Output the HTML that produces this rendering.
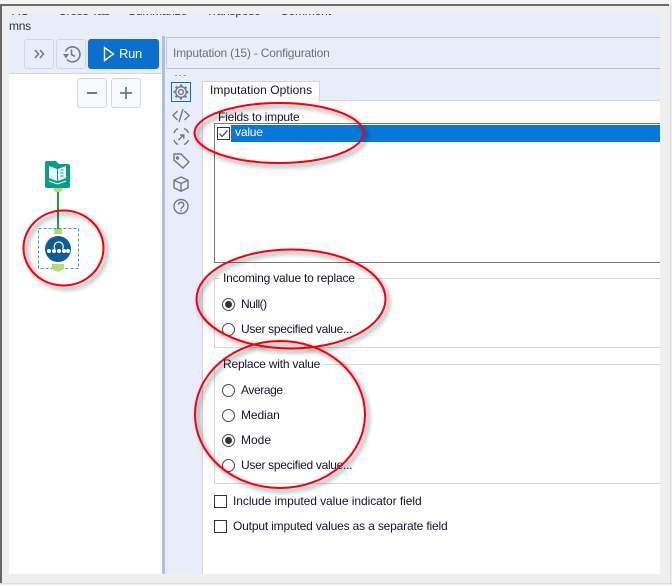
<!DOCTYPE html>
<html><head><meta charset="utf-8">
<style>
html,body{margin:0;padding:0;width:672px;height:586px;overflow:hidden;background:#efefef}
body{position:relative;font-family:"Liberation Sans",sans-serif;font-size:12px;color:#1a1030}
div,span,svg{position:absolute}
.t{white-space:nowrap;line-height:14px;letter-spacing:-.18px}
.btn{box-sizing:border-box;border:1px solid #cdd6ea;border-radius:3px;background:#e9edf9}
.rd{box-sizing:border-box;width:13px;height:13px;border:1px solid #4a4a4a;border-radius:50%;background:#fff;left:222px}
.rd.on:after{content:"";position:absolute;left:2px;top:2px;width:7px;height:7px;border-radius:50%;background:#333}
.cb{box-sizing:border-box;width:13px;height:13px;border:1px solid #333;background:#fff;left:214px}
.gr{box-sizing:border-box;left:214px;width:446px;border:1px solid #d8d8d8;border-right:0}
.lg{left:220px;background:#fff;padding:0 3px}
</style></head><body>
<!-- frame -->
<div style="left:0;top:0;width:672px;height:4px;background:#f4f4f4"></div>
<div style="left:0;top:4px;width:669px;height:2px;background:#6b6b6b"></div>
<div style="left:0;top:4px;width:2px;height:579px;background:#666"></div>
<div style="left:670px;top:5px;width:1px;height:578px;background:#dcdcdc"></div>
<div style="left:0;top:583px;width:672px;height:1px;background:#dcdcdc"></div>
<div style="left:0;top:585px;width:672px;height:1px;background:#fff"></div>
<!-- main -->
<div style="left:9px;top:14px;width:651px;height:560px;background:#e9edf9;overflow:hidden">
  <div class="t" style="left:0;top:-10px;color:#333">&nbsp;AG</div>
  <div class="t" style="left:49px;top:-10px;color:#333">Cross Tab</div>
  <div class="t" style="left:119px;top:-10px;color:#333">Summarize</div>
  <div class="t" style="left:197px;top:-10px;color:#333">Transpose</div>
  <div class="t" style="left:271px;top:-10px;color:#333">Comment</div>
  <div class="t" style="left:0;top:5px;color:#333;letter-spacing:-.3px">mns</div>
</div>
<!-- toolbar buttons -->
<div class="btn" style="left:24px;top:39px;width:30px;height:30px"></div>
<svg style="left:24px;top:39px" width="30" height="30" fill="none" stroke="#6c7a92" stroke-width="1.600"><path d="M11 11l3.500 4-3.500 4M16 11l3.500 4-3.500 4"/></svg>
<div class="btn" style="left:56px;top:39px;width:30px;height:30px"></div>
<svg style="left:56px;top:39px" width="30" height="30" fill="none" stroke="#6c7a92" stroke-width="1.600"><path d="M9.500 12.500A7.500 7.500 0 1 1 11 20.500"/><path d="M15.500 10.500v5l3.500 2"/><path d="M7 15h6l-3 4.500z" fill="#6c7a92" stroke="none"/></svg>
<div style="left:88px;top:39px;width:71px;height:30px;background:#0b6fcf;border-radius:3px"></div>
<svg style="left:88px;top:39px" width="30" height="30" fill="none" stroke="#fff" stroke-width="1.400"><path d="M16.500 8.500v13l9-6.500z"/></svg>
<div class="t" style="left:119px;top:47px;color:#fff;font-size:13px;letter-spacing:-.3px">Run</div>
<!-- canvas -->
<div style="left:9px;top:74px;width:153px;height:500px;background:#fff"></div>
<div style="left:9px;top:73px;width:153px;height:1px;background:#d0d6e6"></div>
<div class="btn" style="left:77px;top:78px;width:30px;height:30px;background:#f7f9fd"></div>
<svg style="left:77px;top:78px" width="30" height="30" stroke="#6c7a92" stroke-width="2"><path d="M10 15h10"/></svg>
<div class="btn" style="left:111px;top:78px;width:30px;height:30px;background:#f7f9fd"></div>
<svg style="left:111px;top:78px" width="30" height="30" stroke="#6c7a92" stroke-width="1.800"><path d="M9 15h12M15 9v12"/></svg>
<!-- workflow -->
<svg style="left:35px;top:155px" width="48" height="120">
  <path d="M10 8a2 2 0 0 1 2-2h9l3 3h9a2 2 0 0 1 2 2v20a2 2 0 0 1-2 2H12a2 2 0 0 1-2-2z" fill="#0f9b8c"/>
  <path d="M14 11l8 3v12l-8-3zM31 11l-8 3v12l8-3z" fill="#e8f7f4"/>
  <path d="M14 26l8.500 3 8.500-3" fill="none" stroke="#e8f7f4" stroke-width="1"/>
  <path d="M25.500 15h3M25.500 18h3M25.500 21h3" stroke="#0f9b8c"/>
  <path d="M18.500 33h9v2l-2 2h-5l-2-2z" fill="#b8d96c"/>
  <path d="M23 37v37" stroke="#1f9c45" stroke-width="2"/>
  <rect x="3.500" y="73.500" width="40" height="40" fill="none" stroke="#3a98e0" stroke-dasharray="3 2"/>
  <rect x="19" y="74" width="8" height="5" fill="#b8d96c"/>
  <circle cx="23" cy="94" r="13" fill="#0f5c96"/>
  <circle cx="14" cy="96" r="2" fill="#fff"/><circle cx="19" cy="96" r="2" fill="#fff"/><circle cx="24" cy="96" r="2" fill="#fff"/><circle cx="29" cy="96" r="2" fill="#fff"/><circle cx="33" cy="96" r="2" fill="#fff"/>
  <path d="M20 94a4.500 4.500 0 1 1 7.500 0" fill="none" stroke="#fff" stroke-width="1.200"/>
  <path d="M17 109h12v5l-6 3-6-3z" fill="#b8d96c"/>
</svg>
<!-- splitter -->
<div style="left:162px;top:36px;width:3px;height:538px;background:#adc0e3"></div>
<!-- config header -->
<div style="left:166px;top:37px;width:494px;height:32px;box-sizing:border-box;border:1px solid #bfbfbf;border-left-color:#d0d0d0;border-right:0;background:#e9edf9"></div>
<div class="t" style="left:173px;top:46px;color:#6f6f76;letter-spacing:-.2px">Imputation (15) - Configuration</div>
<!-- side icons -->
<div style="left:194px;top:74px;width:1px;height:500px;background:#eef1fb"></div>
<div style="left:202px;top:101px;width:1px;height:473px;background:#d6d6d6"></div>
<div style="left:175px;top:75px;width:2px;height:1px;background:#999"></div>
<div style="left:179px;top:75px;width:2px;height:1px;background:#999"></div>
<div style="left:184px;top:75px;width:2px;height:1px;background:#999"></div>
<div style="left:171px;top:82px;width:20px;height:20px;box-sizing:border-box;border:1px solid #0b6fcf"></div>
<svg style="left:165px;top:70px" width="34" height="150" fill="none" stroke="#6b7890" stroke-width="1.400">
  <circle cx="16" cy="22" r="2.400"/>
  <circle cx="16" cy="22" r="5.300"/>
  <circle cx="16" cy="22" r="6.700" stroke-width="1.600" stroke-dasharray="2.200 3.060" stroke-dashoffset="1.100"/>
  <path d="M12.500 41l-4.500 4.500 4.500 4.500M19.500 41l4.500 4.500-4.500 4.500M18 39l-4 13"/>
  <path d="M9 63a8 8 0 0 1 4-4.500M19 58.500a8 8 0 0 1 4.500 4.500M23.500 70a8 8 0 0 1-4.500 4.500M13 74.500a8 8 0 0 1-4-4.500"/>
  <path d="M13.500 70l5-5M15 65h3.800v3.800"/>
  <path d="M9 84h7l8 8-6 6-9-8z"/><circle cx="12.500" cy="88" r="1"/>
  <path d="M16 107l7 3.200v7.600l-7 3.400-7-3.400v-7.600zM9 110.200l7 3.200 7-3.200M16 113.400v7.800"/>
  <circle cx="16" cy="136.500" r="7"/>
  <path d="M13.500 134.800a2.600 2.600 0 1 1 4 2.200c-1 .7-1.500 1-1.500 2"/><path d="M16 140v1.500"/>
</svg>
<!-- right pane -->
<div style="left:203px;top:101px;width:457px;height:473px;background:#fff"></div>
<div style="left:203px;top:100px;width:457px;height:1px;background:#d6d6d6"></div>
<div style="left:202px;top:81px;width:118px;height:21px;box-sizing:border-box;background:#fff;border:1px solid #d6d6d6;border-bottom:0"></div>
<div class="t" style="left:210px;top:83px;letter-spacing:.08px">Imputation Options</div>
<!-- fields -->
<div class="t" style="left:218px;top:110px;letter-spacing:-.2px">Fields to impute</div>
<div style="left:214px;top:123px;width:446px;height:140px;box-sizing:border-box;border:1px solid #7a7a7a;border-right:0;background:#fff"></div>
<div style="left:231px;top:125px;width:429px;height:17px;background:#0678d7"></div>
<div style="left:217px;top:127px;width:13px;height:13px;box-sizing:border-box;border:1px solid #333;background:#fff"></div>
<svg style="left:217px;top:127px" width="13" height="13" fill="none" stroke="#444" stroke-width="1.200"><path d="M2.500 6.500l2.500 3 5.500-6"/></svg>
<div class="t" style="left:235px;top:125px;color:#fff">value</div>
<!-- group 1 -->
<div class="gr" style="top:278px;height:70px"></div>
<div class="t lg" style="top:271px;letter-spacing:-.2px">Incoming value to replace</div>
<div class="rd on" style="top:298px"></div>
<div class="t" style="left:241px;top:297px;letter-spacing:-.5px">Null()</div>
<div class="rd" style="top:323px"></div>
<div class="t" style="left:241px;top:322px;letter-spacing:-.3px">User specified value...</div>
<!-- group 2 -->
<div class="gr" style="top:364px;height:120px"></div>
<div class="t lg" style="top:357px;letter-spacing:-.2px">Replace with value</div>
<div class="rd" style="top:384px"></div>
<div class="t" style="left:241px;top:383px;letter-spacing:-.4px">Average</div>
<div class="rd" style="top:409px"></div>
<div class="t" style="left:241px;top:408px;letter-spacing:-.1px">Median</div>
<div class="rd on" style="top:434px"></div>
<div class="t" style="left:241px;top:433px;letter-spacing:0">Mode</div>
<div class="rd" style="top:459px"></div>
<div class="t" style="left:241px;top:458px;letter-spacing:-.3px">User specified value...</div>
<!-- checkboxes -->
<div class="cb" style="top:495px"></div>
<div class="t" style="left:233px;top:494px;letter-spacing:-.06px">Include imputed value indicator field</div>
<div class="cb" style="top:520px"></div>
<div class="t" style="left:233px;top:519px;letter-spacing:-.17px">Output imputed values as a separate field</div>
<!-- red ellipses -->
<svg style="left:0;top:0" width="672" height="586" fill="none">
  <defs><filter id="s" x="-20%" y="-20%" width="140%" height="140%"><feDropShadow dx="3" dy="3" stdDeviation="2.500" flood-color="#000" flood-opacity=".5"/></filter></defs>
  <g stroke="#f4000c" stroke-width="2" filter="url(#s)">
    <ellipse cx="279" cy="133" rx="84.500" ry="30"/>
    <ellipse cx="291" cy="299" rx="94.500" ry="49.500"/>
    <ellipse cx="280" cy="414.500" rx="85" ry="73.500"/>
    <ellipse cx="63.500" cy="248" rx="40" ry="37.500"/>
  </g>
</svg>
</body></html>
